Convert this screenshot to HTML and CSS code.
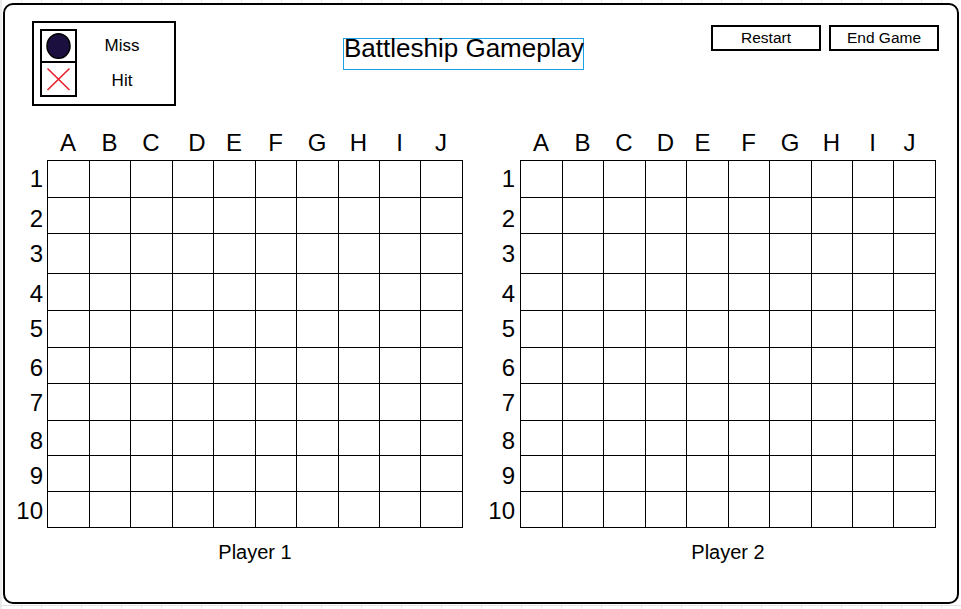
FILE: index.html
```html
<!DOCTYPE html>
<html lang="en">
<head>
<meta charset="utf-8">
<title>Battleship Gameplay</title>
<link rel="stylesheet" href="styles.css">
</head>
<body>
<div class="frame">
  <header class="top">
    <div class="legend">
      <div class="legend-icons">
        <div class="legend-cell">
          <svg width="33" height="30" viewBox="0 0 33 30"><ellipse cx="16.5" cy="15" rx="11.5" ry="12.3" fill="#1a0f3e" stroke="#000" stroke-width="1.5"/></svg>
        </div>
        <div class="legend-cell legend-cell-hit">
          <svg width="33" height="32" viewBox="0 0 33 32"><path d="M5.5 5.5 L27.5 27 M27.5 5.5 L5.5 27" stroke="#e8212b" stroke-width="1.6" fill="none"/></svg>
        </div>
      </div>
      <div class="legend-labels">
        <div class="legend-label">Miss</div>
        <div class="legend-label legend-label-hit">Hit</div>
      </div>
    </div>
    <div class="title">Battleship Gameplay</div>
    <div class="actions">
      <button class="btn">Restart</button>
      <button class="btn">End Game</button>
    </div>
  </header>

  <main class="boards">
    <section class="board board-one">
      <div class="cols">
        <span class="col w42">A</span><span class="col w41">B</span><span class="col w42">C</span><span class="col w41 nudge-right">D</span><span class="col w42">E</span><span class="col w41">F</span><span class="col w42">G</span><span class="col w41">H</span><span class="col w41">I</span><span class="col w42">J</span>
      </div>
      <div class="board-body">
        <div class="nums">
          <span>1</span><span>2</span><span>3</span><span>4</span><span>5</span><span>6</span><span>7</span><span>8</span><span>9</span><span>10</span>
        </div>
        <div class="grid">
          <div></div><div></div><div></div><div></div><div></div><div></div><div></div><div></div><div></div><div></div>
          <div></div><div></div><div></div><div></div><div></div><div></div><div></div><div></div><div></div><div></div>
          <div></div><div></div><div></div><div></div><div></div><div></div><div></div><div></div><div></div><div></div>
          <div></div><div></div><div></div><div></div><div></div><div></div><div></div><div></div><div></div><div></div>
          <div></div><div></div><div></div><div></div><div></div><div></div><div></div><div></div><div></div><div></div>
          <div></div><div></div><div></div><div></div><div></div><div></div><div></div><div></div><div></div><div></div>
          <div></div><div></div><div></div><div></div><div></div><div></div><div></div><div></div><div></div><div></div>
          <div></div><div></div><div></div><div></div><div></div><div></div><div></div><div></div><div></div><div></div>
          <div></div><div></div><div></div><div></div><div></div><div></div><div></div><div></div><div></div><div></div>
          <div></div><div></div><div></div><div></div><div></div><div></div><div></div><div></div><div></div><div></div>
        </div>
      </div>
      <div class="player">Player 1</div>
    </section>

    <section class="board board-two">
      <div class="cols">
        <span class="col w42">A</span><span class="col w41">B</span><span class="col w42">C</span><span class="col w41">D</span><span class="col w42 nudge-left">E</span><span class="col w41">F</span><span class="col w42">G</span><span class="col w41">H</span><span class="col w41">I</span><span class="col w42 nudge-left">J</span>
      </div>
      <div class="board-body">
        <div class="nums">
          <span>1</span><span>2</span><span>3</span><span>4</span><span>5</span><span>6</span><span>7</span><span>8</span><span>9</span><span>10</span>
        </div>
        <div class="grid">
          <div></div><div></div><div></div><div></div><div></div><div></div><div></div><div></div><div></div><div></div>
          <div></div><div></div><div></div><div></div><div></div><div></div><div></div><div></div><div></div><div></div>
          <div></div><div></div><div></div><div></div><div></div><div></div><div></div><div></div><div></div><div></div>
          <div></div><div></div><div></div><div></div><div></div><div></div><div></div><div></div><div></div><div></div>
          <div></div><div></div><div></div><div></div><div></div><div></div><div></div><div></div><div></div><div></div>
          <div></div><div></div><div></div><div></div><div></div><div></div><div></div><div></div><div></div><div></div>
          <div></div><div></div><div></div><div></div><div></div><div></div><div></div><div></div><div></div><div></div>
          <div></div><div></div><div></div><div></div><div></div><div></div><div></div><div></div><div></div><div></div>
          <div></div><div></div><div></div><div></div><div></div><div></div><div></div><div></div><div></div><div></div>
          <div></div><div></div><div></div><div></div><div></div><div></div><div></div><div></div><div></div><div></div>
        </div>
      </div>
      <div class="player">Player 2</div>
    </section>
  </main>
</div>
</body>
</html>
```

FILE: styles.css
```css
* { box-sizing: border-box; }

html { background: #fff; }

body {
  margin: 0;
  height: 609px;
  overflow: hidden;
  font-family: "Liberation Sans", Arial, sans-serif;
  color: #000;
  background-color: #fff;
  background-image:
    linear-gradient(#e2e2e2, #e2e2e2),
    repeating-linear-gradient(90deg, #ececec 0 1px, transparent 1px 20px);
  background-size: 100% 1px, 100% 100%;
  background-position: 0 605px, 1px 0;
  background-repeat: no-repeat, repeat;
}

.frame {
  margin: 3px 0 0 3px;
  width: 956px;
  height: 601px;
  border: 2px solid #000;
  border-radius: 10px;
  background: #fff;
}

/* header */
.top {
  display: flex;
  align-items: flex-start;
  height: 101px;
  padding: 16px 0 0 27px;
}

.legend {
  display: flex;
  width: 144px;
  height: 85px;
  border: 2px solid #000;
  padding: 6px 7px 7px 6px;
}

.legend-icons {
  width: 37px;
  border: 2px solid #000;
  display: flex;
  flex-direction: column;
}

.legend-cell {
  height: 30px;
  display: flex;
}

.legend-cell-hit {
  height: 34px;
  border-top: 2px solid #000;
}

.legend-cell svg { display: block; }

.legend-labels {
  flex: 1;
  padding-top: 2px;
  display: flex;
  flex-direction: column;
}

.legend-label {
  height: 30px;
  line-height: 30px;
  font-size: 17px;
  text-align: center;
}

.legend-label-hit {
  margin-top: 3px;
  height: 32px;
  line-height: 34px;
}

.title {
  margin: 17px 0 0 167px;
  width: 241px;
  height: 32px;
  border: 1px solid #1ba1e2;
  font-size: 26px;
  line-height: 18px;
  text-align: center;
  white-space: nowrap;
}

.actions {
  display: flex;
  gap: 8px;
  margin: 4px 0 0 127px;
}

.btn {
  width: 110px;
  height: 26px;
  border: 2px solid #000;
  background: #fff;
  padding: 0;
  margin: 0;
  font-family: "Liberation Sans", Arial, sans-serif;
  font-size: 15.5px;
  line-height: 22px;
  color: #000;
  text-align: center;
}

/* boards */
.boards {
  display: flex;
  margin-top: 23px;
}

.board { --numw: 42px; --numpad: 4px; }
.board-two { --numw: 57px; --numpad: 5px; }

.cols {
  display: flex;
  margin-left: var(--numw);
  height: 31px;
}

.col {
  font-size: 24px;
  line-height: 28px;
  text-align: center;
}

.w42 { width: 42px; }
.w41 { width: 41px; }
.nudge-right { padding-left: 9px; }
.nudge-left { padding-right: 9px; }

.board-body { display: flex; }

.nums {
  width: var(--numw);
  padding-right: var(--numpad);
  display: grid;
  grid-template-rows: 37px 36px 40px 37px 37px 36px 37px 35px 36px 36px;
}

.nums span {
  font-size: 24px;
  display: flex;
  align-items: center;
  justify-content: flex-end;
}

.nums span:nth-child(2) { padding-top: 8px; }
.nums span:nth-child(3) { padding-top: 2px; }
.nums span:nth-child(4) { padding-top: 5px; }
.nums span:nth-child(6) { padding-top: 5px; }
.nums span:nth-child(7) { padding-top: 3px; }
.nums span:nth-child(8) { padding-top: 7px; }
.nums span:nth-child(9) { padding-top: 6px; }
.nums span:nth-child(10) { padding-top: 3px; }

.grid {
  display: grid;
  grid-template-columns: 41px 40px 41px 40px 41px 40px 41px 40px 40px 41px;
  grid-template-rows: 36px 35px 39px 36px 36px 35px 36px 34px 35px 35px;
  gap: 1px;
  background: #000;
  border: 1px solid #000;
}

.grid div { background: #fff; }

.player {
  margin: 14px 0 0 var(--numw);
  width: 416px;
  font-size: 20px;
  line-height: 20px;
  text-align: center;
}
```
